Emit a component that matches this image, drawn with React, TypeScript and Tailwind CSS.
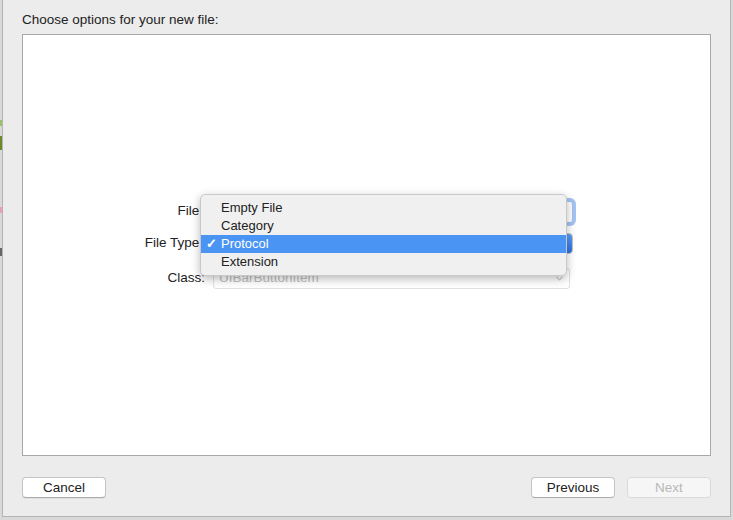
import { ChevronDown, ChevronsUpDown } from "lucide-react";

const menuItems = ["Empty File", "Category", "Protocol", "Extension"];

const font = { fontFamily: '"Liberation Sans", Arial, sans-serif' };

const App = () => {
  return (
    <div
      className="w-[733px] h-[520px] bg-[#d9d9d9] overflow-hidden relative text-[13.5px] text-[#222]"
      style={font}
    >
      {/* slivers of the window behind */}
      <div className="absolute left-0 top-[120px] w-[2px] h-[6px] bg-[#9bc26a]" />
      <div className="absolute left-0 top-[136px] w-[2px] h-[14px] bg-[#6a8a2c]" />
      <div className="absolute left-0 top-[207px] w-[2px] h-[6px] bg-[#e6a0b0]" />
      <div className="absolute left-0 top-[248px] w-[2px] h-[8px] bg-[#666]" />

      {/* sheet */}
      <div className="ml-[2px] mr-[2px] h-[517px] bg-[#ececec] border-l border-r border-b border-[#b4b4b4] flex flex-col">
        <div className="pl-[19px] pt-[10px] h-[34px]">Choose options for your new file:</div>

        {/* content panel */}
        <div className="mx-[19px] h-[422px] bg-white border border-[#a8a8a8] relative">
          <div className="pt-[165px] flex flex-col gap-[10px]">
            {/* File row */}
            <div className="flex items-center h-[23px]">
              <div className="w-[181px] text-right pr-[1px]">File:</div>
              <div className="ml-[8px] w-[361px] h-[22px] bg-white border border-[#9fbef0] rounded-[3px] ring-[3px] ring-[#a5c4f3]" />
            </div>
            {/* File Type row */}
            <div className="flex items-center h-[21px]">
              <div className="w-[181px] text-right pr-[1px]">File Type:</div>
              <div className="ml-[8px] w-[361px] h-[21px] bg-white border border-[#c5c5c5] rounded-[4px] flex">
                <div className="flex-1" />
                <div className="w-[17px] bg-gradient-to-b from-[#5d9ef7] to-[#2b6fe0] rounded-r-[3px] flex items-center justify-center">
                  <ChevronsUpDown className="w-[10px] h-[10px] text-white" strokeWidth={3} />
                </div>
              </div>
            </div>
            {/* Class row */}
            <div className="flex items-center h-[21px] mt-[4px]">
              <div className="w-[182px] text-right">Class:</div>
              <div className="ml-[8px] w-[357px] h-[21px] bg-white border border-[#e0e0e0] rounded-[3px] flex items-center pl-[5px] text-[#c0c0c0]">
                <span className="flex-1">UIBarButtonItem</span>
                <ChevronDown className="w-[11px] h-[11px] mr-[4px] text-[#c8c8c8]" strokeWidth={2.5} />
              </div>
            </div>
          </div>

          {/* popup menu */}
          <div className="absolute left-[177px] top-[159px] w-[367px] h-[82px] bg-[#f0f0f0] rounded-[5px] border border-[#c9c9c9] shadow-[0_3px_10px_rgba(0,0,0,0.28)] pt-[4px] text-[13px]">
            {menuItems.map((item) => {
              const active = item === "Protocol";
              return (
                <div
                  key={item}
                  className={`h-[18px] flex items-center ${active ? "bg-[#4a94f4] text-white" : "text-[#222]"}`}
                >
                  <span className="w-[20px] pl-[5px] font-bold">{active ? "✓" : ""}</span>
                  <span>{item}</span>
                </div>
              );
            })}
          </div>
        </div>

        {/* buttons */}
        <div className="flex items-center mx-[19px] mt-[21px]">
          <button className="w-[84px] h-[21px] bg-white border border-[#c4c4c4] border-b-[#aaa] rounded-[4px] shadow-[0_1px_0_rgba(0,0,0,0.05)]">
            Cancel
          </button>
          <div className="flex-1" />
          <button className="w-[84px] h-[21px] bg-white border border-[#c4c4c4] border-b-[#aaa] rounded-[4px]">
            Previous
          </button>
          <button className="ml-[12px] w-[84px] h-[21px] bg-[#f6f6f6] border border-[#dadada] rounded-[4px] text-[#b8b8b8]">
            Next
          </button>
        </div>
      </div>
    </div>
  );
};

export default App;
